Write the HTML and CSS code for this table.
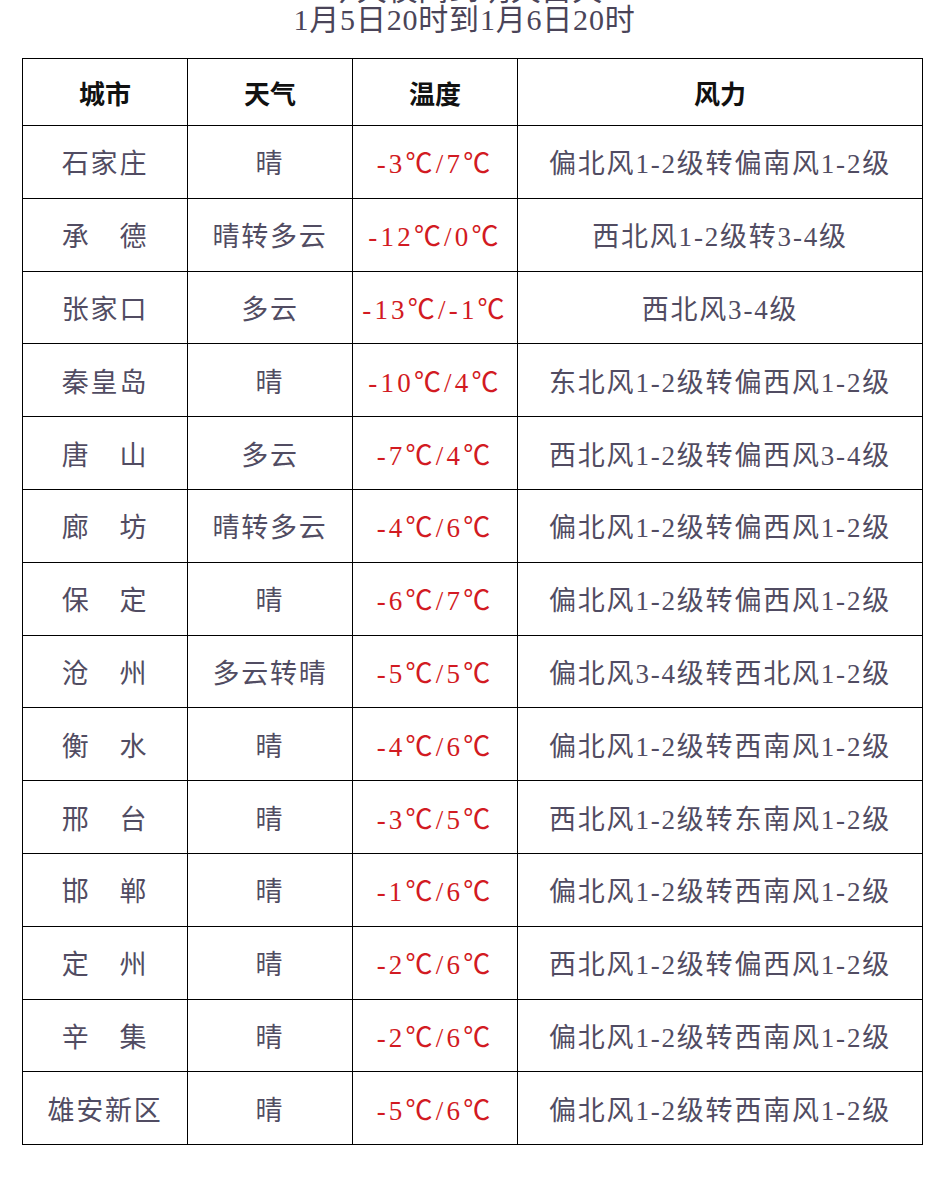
FILE: index.html
```html
<!DOCTYPE html>
<html lang="zh">
<head>
<meta charset="utf-8">
<title>天气预报</title>
<link rel="stylesheet" href="styles.css">
</head>
<body>
<div class="title">
  <div class="line">今天夜间到明天白天</div>
  <div class="line">1月5日20时到1月6日20时</div>
</div>
<table class="wx">
  <colgroup>
    <col class="c1"><col class="c2"><col class="c3"><col class="c4">
  </colgroup>
  <thead>
    <tr><th>城市</th><th>天气</th><th>温度</th><th>风力</th></tr>
  </thead>
  <tbody>
    <tr><td>石家庄</td><td>晴</td><td class="t">-3℃/7℃</td><td>偏北风1-2级转偏南风1-2级</td></tr>
    <tr><td>承　德</td><td>晴转多云</td><td class="t">-12℃/0℃</td><td>西北风1-2级转3-4级</td></tr>
    <tr><td>张家口</td><td>多云</td><td class="t">-13℃/-1℃</td><td>西北风3-4级</td></tr>
    <tr><td>秦皇岛</td><td>晴</td><td class="t">-10℃/4℃</td><td>东北风1-2级转偏西风1-2级</td></tr>
    <tr><td>唐　山</td><td>多云</td><td class="t">-7℃/4℃</td><td>西北风1-2级转偏西风3-4级</td></tr>
    <tr><td>廊　坊</td><td>晴转多云</td><td class="t">-4℃/6℃</td><td>偏北风1-2级转偏西风1-2级</td></tr>
    <tr><td>保　定</td><td>晴</td><td class="t">-6℃/7℃</td><td>偏北风1-2级转偏西风1-2级</td></tr>
    <tr><td>沧　州</td><td>多云转晴</td><td class="t">-5℃/5℃</td><td>偏北风3-4级转西北风1-2级</td></tr>
    <tr><td>衡　水</td><td>晴</td><td class="t">-4℃/6℃</td><td>偏北风1-2级转西南风1-2级</td></tr>
    <tr><td>邢　台</td><td>晴</td><td class="t">-3℃/5℃</td><td>西北风1-2级转东南风1-2级</td></tr>
    <tr><td>邯　郸</td><td>晴</td><td class="t">-1℃/6℃</td><td>偏北风1-2级转西南风1-2级</td></tr>
    <tr><td>定　州</td><td>晴</td><td class="t">-2℃/6℃</td><td>西北风1-2级转偏西风1-2级</td></tr>
    <tr><td>辛　集</td><td>晴</td><td class="t">-2℃/6℃</td><td>偏北风1-2级转西南风1-2级</td></tr>
    <tr><td>雄安新区</td><td>晴</td><td class="t">-5℃/6℃</td><td>偏北风1-2级转西南风1-2级</td></tr>
  </tbody>
</table>
</body>
</html>
```

FILE: styles.css
```css
html, body {
  margin: 0;
  padding: 0;
  background: #ffffff;
}

body {
  font-family: "Liberation Serif", "Noto Sans CJK SC", serif;
  overflow: hidden;
}

.title {
  width: 929px;
  margin-top: -25px;
  text-align: center;
  color: #4a4458;
  font-size: 30px;
  line-height: 30px;
  letter-spacing: 0.8px;
}

.wx {
  margin: 23px 0 0 22px;
  border-collapse: collapse;
  width: 900px;
  table-layout: fixed;
}

.c1, .c2, .c3 { width: 165px; }
.c4 { width: 405px; }

.wx th, .wx td {
  border: 1px solid #000000;
  text-align: center;
  vertical-align: middle;
  padding: 0;
  white-space: nowrap;
}

.wx th {
  height: 66px;
  font-size: 26px;
  font-weight: bold;
  color: #111111;
}

.wx td {
  height: 71.8px;
  font-size: 27px;
  color: #514c62;
  letter-spacing: 1.8px;
}

.wx td.t {
  color: #d21a22;
  letter-spacing: 3.2px;
}
```
